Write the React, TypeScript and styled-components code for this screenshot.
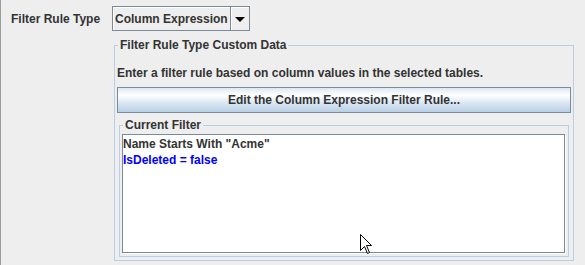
import styled, { createGlobalStyle } from 'styled-components';

const GlobalStyle = createGlobalStyle`
  html, body {
    margin: 0;
    padding: 0;
    background: #eeeeee;
  }
  * {
    box-sizing: border-box;
  }
`;

const Page = styled.div`
  position: relative;
  width: 585px;
  height: 265px;
  padding-top: 6px;
  background: #eeeeee;
  border-left: 1px solid #9a9a9a;
  font-family: 'Liberation Sans', Arial, sans-serif;
  font-size: 12px;
  font-weight: bold;
  color: #333333;
  overflow: hidden;
`;

const TypeRow = styled.div`
  display: grid;
  grid-template-columns: 111px 138px;
  align-items: center;
  height: 25px;
`;

const Label = styled.span`
  padding-left: 10px;
  line-height: 14px;
`;

const Combo = styled.div`
  display: flex;
  height: 25px;
  border: 1px solid #7a8a99;
  background: #eeeeee;
`;

const ComboField = styled.div`
  flex: 1;
  display: flex;
  align-items: center;
  padding-left: 2px;
  border-right: 1px solid #7a8a99;
  box-shadow: inset 1px 1px 0 #ffffff;
  line-height: 14px;
`;

const ComboArrow = styled.div`
  width: 18px;
  display: flex;
  align-items: center;
  justify-content: center;
  box-shadow: inset 1px 1px 0 #ffffff;

  &::after {
    content: '';
    border-left: 5px solid transparent;
    border-right: 5px solid transparent;
    border-top: 5px solid #000000;
    margin-top: 1px;
  }
`;

const TitledPanel = styled.fieldset<{ $inset?: boolean }>`
  margin: ${(p) => (p.$inset ? '5px 2px 2px' : '7px 0 0 113px')};
  width: ${(p) => (p.$inset ? 'auto' : '460px')};
  padding: ${(p) => (p.$inset ? '2px 3px 3px 2px' : '14px 2px 1px')};
  border: 1px solid #b8cfe5;
  min-width: 0;
`;

const Title = styled.legend`
  padding: 0 2px;
  margin-left: 1px;
  line-height: 14px;
  color: #333333;
`;

const Hint = styled.div`
  line-height: 14px;
`;

const ActionButton = styled.button`
  display: block;
  width: 100%;
  height: 26px;
  margin-top: 7px;
  padding: 0;
  border: 1px solid #7a8a99;
  background: linear-gradient(
    to bottom,
    #dde8f3 0%,
    #ffffff 30%,
    #dde8f3 60%,
    #b8cfe5 100%
  );
  font: inherit;
  color: #333333;
  text-align: center;
  cursor: default;
`;

const FilterText = styled.div`
  height: 119px;
  border: 1px solid #7a8a99;
  box-shadow: 1px 1px 0 #ffffff;
  background: #ffffff;
  padding: 1px 0 0 0;
`;

const FilterLine = styled.div<{ $color?: string }>`
  line-height: 16px;
  color: ${(p) => p.$color || '#333333'};
`;

const Pointer = styled.svg`
  position: absolute;
  left: 358px;
  top: 233px;
`;

const lines = [
  { text: 'Name Starts With "Acme"' },
  { text: 'IsDeleted = false', color: '#0000ff' },
];

const App: React.FC = () => {
  return (
    <>
      <GlobalStyle />
      <Page>
        <TypeRow>
          <Label>Filter Rule Type</Label>
          <Combo>
            <ComboField>Column Expression</ComboField>
            <ComboArrow />
          </Combo>
        </TypeRow>

        <TitledPanel>
          <Title>Filter Rule Type Custom Data</Title>
          <Hint>Enter a filter rule based on column values in the selected tables.</Hint>
          <ActionButton>Edit the Column Expression Filter Rule...</ActionButton>

          <TitledPanel $inset>
            <Title>Current Filter</Title>
            <FilterText>
              {lines.map((line) => (
                <FilterLine key={line.text} $color={line.color}>
                  {line.text}
                </FilterLine>
              ))}
            </FilterText>
          </TitledPanel>
        </TitledPanel>

        <Pointer width="14" height="22" viewBox="0 0 14 22">
          <path
            d="M1.5 1.5 V17.5 L5.5 13.5 L8.5 20.5 L10.5 19.5 L7.5 12.5 H12.5 Z"
            fill="#ffffff"
            stroke="#000000"
            strokeWidth="1"
            strokeLinejoin="miter"
          />
        </Pointer>
      </Page>
    </>
  );
};

export default App;
